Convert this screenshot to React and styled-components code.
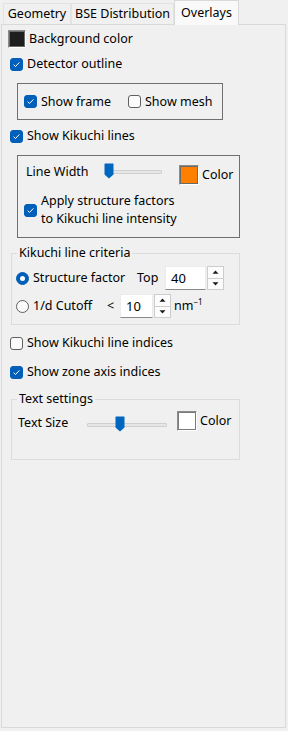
import React from 'react';
import styled, { createGlobalStyle } from 'styled-components';

const Global = createGlobalStyle`
  html, body { margin: 0; padding: 0; background: #f0f0f0; }
  body {
    font-family: "Noto Sans", "Open Sans", sans-serif;
    font-size: 12.5px;
    line-height: 16px;
    color: #000;
  }
  * { box-sizing: border-box; }
`;

const Window = styled.div`
  width: 288px;
  height: 731px;
  overflow: hidden;
  display: flex;
  flex-direction: column;
  background: #f0f0f0;
`;

const TabBar = styled.div`
  display: flex;
  align-items: flex-end;
  height: 24px;
  padding-left: 3px;
  position: relative;
  z-index: 1;
`;

const Tab = styled.div`
  width: ${(p) => p.$w}px;
  height: ${(p) => (p.$active ? 25 : 21)}px;
  margin-bottom: ${(p) => (p.$active ? -1 : 0)}px;
  display: flex;
  align-items: center;
  justify-content: center;
  background: ${(p) => (p.$active ? '#f9f9f9' : '#f0f0f0')};
  border: 1px solid ${(p) => (p.$active ? '#d9d9d9' : '#e3e3e3')};
  border-bottom: none;
  white-space: nowrap;
`;

const Panel = styled.div`
  margin-left: 1px;
  width: 285px;
  height: 704px;
  border: 1px solid #d9d9d9;
  background: #f0f0f0;
  display: flex;
  flex-direction: column;
  align-items: flex-start;
`;

const Row = styled.div`
  display: flex;
  align-items: center;
  gap: ${(p) => p.$gap ?? 4}px;
  height: ${(p) => p.$h ?? 16}px;
  margin-top: ${(p) => p.$mt ?? 0}px;
  margin-left: ${(p) => p.$ml ?? 0}px;
  padding-left: ${(p) => p.$pl ?? 0}px;
  white-space: nowrap;
`;

const Frame = styled.div`
  width: ${(p) => p.$w}px;
  height: ${(p) => p.$h}px;
  margin-top: ${(p) => p.$mt}px;
  margin-left: 15px;
  border: 1px solid #6f6f6f;
  display: flex;
  flex-direction: ${(p) => (p.$col ? 'column' : 'row')};
  align-items: ${(p) => (p.$col ? 'flex-start' : 'center')};
`;

const Group = styled.div`
  width: 229px;
  height: ${(p) => p.$h}px;
  margin-top: ${(p) => p.$mt}px;
  margin-left: 9px;
  border: 1px solid #dcdcdc;
  display: flex;
  flex-direction: column;
  align-items: flex-start;
`;

const Legend = styled.div`
  margin-top: -9px;
  margin-left: 5px;
  padding: 0 2px;
  background: #f0f0f0;
  white-space: nowrap;
`;

const Cell = styled.div`
  width: ${(p) => p.$w}px;
  flex: none;
  display: flex;
  align-items: center;
  gap: 4px;
  align-self: ${(p) => (p.$mt !== undefined ? 'flex-start' : 'auto')};
  margin-top: ${(p) => p.$mt ?? 0}px;
`;

const Box = styled.span`
  width: 13px;
  height: 13px;
  flex: none;
  border-radius: 3px;
  display: inline-flex;
  align-items: center;
  justify-content: center;
  background: ${(p) => (p.$on ? '#005fb8' : '#fbfbfb')};
  border: 1px solid ${(p) => (p.$on ? '#005fb8' : '#5f5f5f')};
`;

const Radio = styled.span`
  width: 13px;
  height: 13px;
  flex: none;
  border-radius: 50%;
  display: inline-flex;
  align-items: center;
  justify-content: center;
  background: ${(p) => (p.$on ? '#005fb8' : '#fbfbfb')};
  border: 1px solid ${(p) => (p.$on ? '#005fb8' : '#5f5f5f')};
  &::after {
    content: '';
    display: ${(p) => (p.$on ? 'block' : 'none')};
    width: 5px;
    height: 5px;
    border-radius: 50%;
    background: #fff;
  }
`;

const Swatch = styled.span`
  width: ${(p) => p.$s}px;
  height: ${(p) => p.$s}px;
  flex: none;
  background: ${(p) => p.$c};
  border-top: 1px solid #8c8c8c;
  border-left: 1px solid #8c8c8c;
  border-right: 1px solid #ffffff;
  border-bottom: 1px solid #ffffff;
  box-shadow: inset 0 0 0 1px ${(p) => p.$inner};
`;

const Multi = styled.div`
  line-height: 18px;
  white-space: nowrap;
`;

const SliderWrap = styled.div`
  position: relative;
  width: ${(p) => p.$w}px;
  height: 16px;
  flex: none;
  align-self: flex-start;
  margin-top: ${(p) => p.$mt}px;
`;

const Track = styled.div`
  position: absolute;
  left: 1px;
  right: 0;
  top: 7px;
  height: 4px;
  background: #e6e6e6;
  border: 1px solid #cfcfcf;
  border-radius: 1px;
`;

const Thumb = styled.svg`
  position: absolute;
  top: 0;
`;

const TextInput = styled.div`
  width: ${(p) => p.$w}px;
  height: 24px;
  flex: none;
  background: #ffffff;
  border: 1px solid #ececec;
  border-bottom: 1px solid #8a8a8a;
  padding-left: 5px;
  display: flex;
  align-items: center;
  font-size: 13px;
`;

const Spin = styled.div`
  width: 17px;
  height: 24px;
  flex: none;
  margin-left: 1px;
  display: flex;
  flex-direction: column;
  border: 1px solid #cdcdcd;
  background: #fcfcfc;
`;

const SpinBtn = styled.div`
  flex: 1;
  display: flex;
  align-items: center;
  justify-content: center;
  & + & { border-top: 1px solid #cdcdcd; }
`;

const Sup = styled.sup`
  font-size: 8px;
  line-height: 0;
  vertical-align: 5px;
`;

const Check = ({ on }) => (
  <Box $on={on}>
    {on && (
      <svg width="9" height="9" viewBox="0 0 9 9">
        <path d="M1.6 4.7 L3.5 6.5 L7.4 2.4" fill="none" stroke="#fff" strokeWidth="1" />
      </svg>
    )}
  </Box>
);

const Slider = ({ w, mt, pos }) => (
  <SliderWrap $w={w} $mt={mt}>
    <Track />
    <Thumb width="10" height="16" viewBox="0 0 10 16" style={{ left: pos }}>
      <path d="M1 0.5 H9 a0.5 0.5 0 0 1 0.5 0.5 V11.5 L5 15.5 L0.5 11.5 V1 a0.5 0.5 0 0 1 0.5 -0.5 Z" fill="#0067c0" />
    </Thumb>
  </SliderWrap>
);

const Arrow = ({ up }) => (
  <svg width="7" height="4" viewBox="0 0 7 4">
    <path d={up ? 'M0.5 3.8 L3.5 0.5 L6.5 3.8 Z' : 'M0.5 0.2 L3.5 3.5 L6.5 0.2 Z'} fill="#1a1a1a" />
  </svg>
);

const Spinner = () => (
  <Spin>
    <SpinBtn><Arrow up /></SpinBtn>
    <SpinBtn><Arrow /></SpinBtn>
  </Spin>
);

export default function App() {
  return (
    <Window>
      <Global />
      <TabBar>
        <Tab $w={68}>Geometry</Tab>
        <Tab $w={103}>BSE Distribution</Tab>
        <Tab $w={65} $active>Overlays</Tab>
      </TabBar>
      <Panel>
        <Row $mt={5} $ml={6} $h={18} $gap={3}>
          <Swatch $s={18} $c="#1e1e1e" $inner="#6a6a6a" />
          <span>Background color</span>
        </Row>
        <Row $mt={8} $ml={8}>
          <Check on />
          <span>Detector outline</span>
        </Row>
        <Frame $w={206} $h={37} $mt={11}>
          <Row $pl={6}>
            <Cell $w={100}>
              <Check on />
              <span>Show frame</span>
            </Cell>
            <Cell $w={90}>
              <Check />
              <span>Show mesh</span>
            </Cell>
          </Row>
        </Frame>
        <Row $mt={8} $ml={8}>
          <Check on />
          <span>Show Kikuchi lines</span>
        </Row>
        <Frame $w={223} $h={83} $mt={11} $col>
          <Row $mt={9} $pl={8} $h={20} $gap={0}>
            <Cell $w={78} $mt={-1}>Line Width</Cell>
            <Slider w={58} mt={-2} pos={0} />
            <Cell $w={17} />
            <Swatch $s={20} $c="#ff8000" $inner="#6a6a6a" />
            <Cell $w={30} style={{ marginLeft: 3 }}>Color</Cell>
          </Row>
          <Row $mt={7} $pl={6} $h={36}>
            <Check on />
            <Multi>
              Apply structure factors
              <br />
              to Kikuchi line intensity
            </Multi>
          </Row>
        </Frame>
        <Group $h={72} $mt={15}>
          <Legend>Kikuchi line criteria</Legend>
          <Row $mt={5} $pl={4} $h={24} $gap={0}>
            <Cell $w={121}>
              <Radio $on />
              <span>Structure factor</span>
            </Cell>
            <Cell $w={28}>Top</Cell>
            <TextInput $w={41}>40</TextInput>
            <Spinner />
          </Row>
          <Row $mt={4} $pl={4} $h={24} $gap={0}>
            <Cell $w={91}>
              <Radio />
              <span>1/d Cutoff</span>
            </Cell>
            <Cell $w={13}>&lt;</Cell>
            <TextInput $w={33}>10</TextInput>
            <Spinner />
            <Cell $w={40} style={{ marginLeft: 3 }}>
              <span>
                nm<Sup>−1</Sup>
              </span>
            </Cell>
          </Row>
        </Group>
        <Row $mt={10} $ml={8}>
          <Check />
          <span>Show Kikuchi line indices</span>
        </Row>
        <Row $mt={13} $ml={8}>
          <Check on />
          <span>Show zone axis indices</span>
        </Row>
        <Group $h={61} $mt={19}>
          <Legend>Text settings</Legend>
          <Row $mt={4} $pl={6} $h={20} $gap={0}>
            <Cell $w={68} $mt={4}>Text Size</Cell>
            <Slider w={81} mt={5} pos={29} />
            <Cell $w={10} />
            <Swatch $s={20} $c="#ffffff" $inner="#7a7a7a" />
            <Cell $w={30} style={{ marginLeft: 3 }}>Color</Cell>
          </Row>
        </Group>
      </Panel>
    </Window>
  );
}
